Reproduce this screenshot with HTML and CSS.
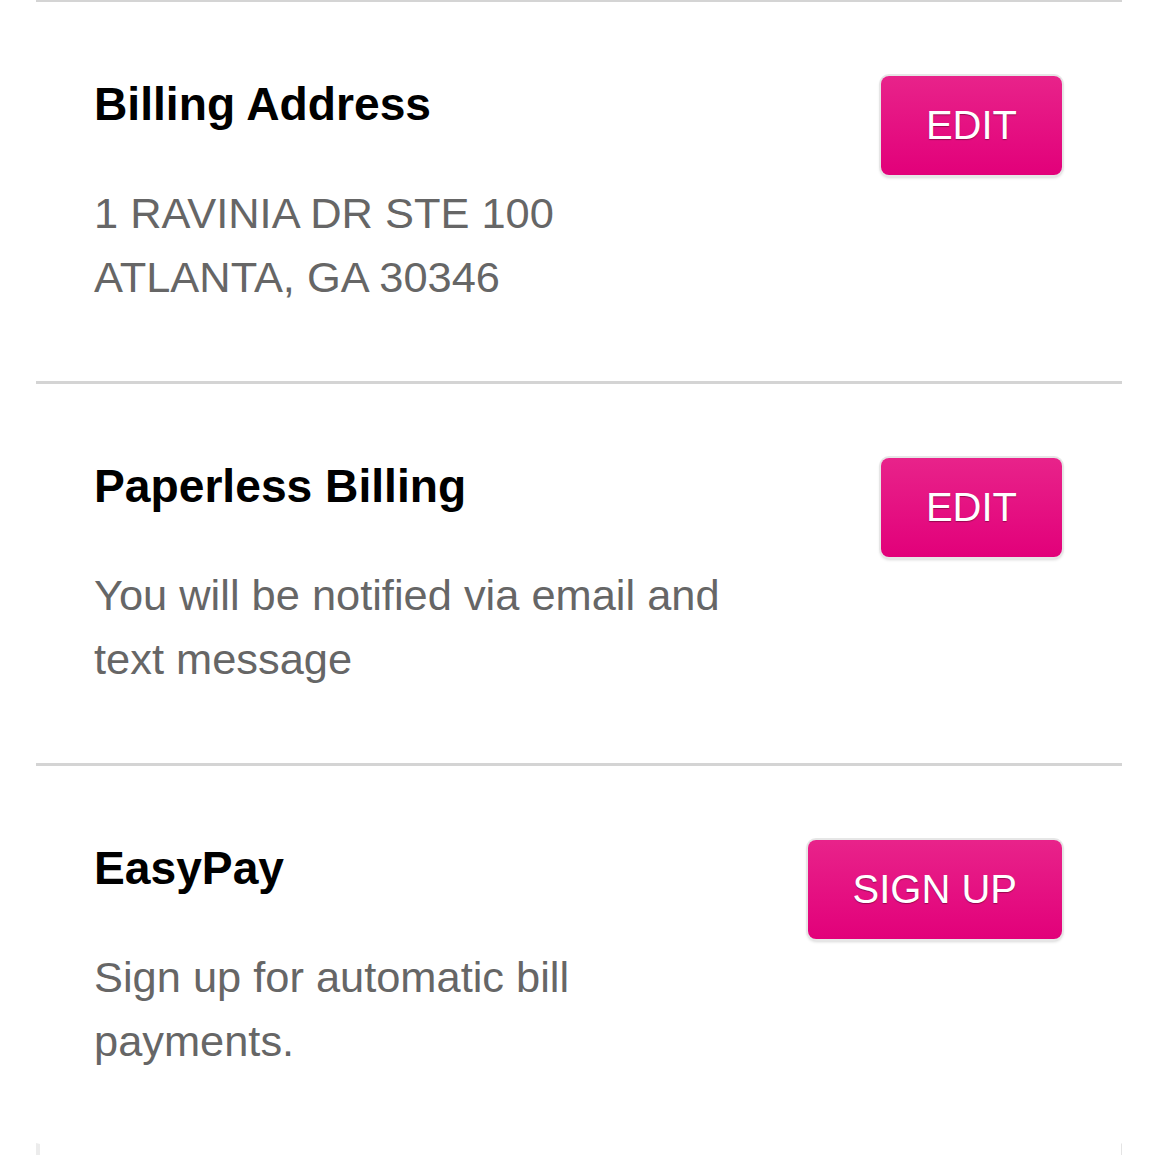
FILE: index.html
```html
<!DOCTYPE html>
<html lang="en">
<head>
<meta charset="utf-8">
<title>Billing settings</title>
<link rel="stylesheet" href="styles.css">
</head>
<body>
<div class="list">
  <section class="item">
    <div class="info">
      <h2 class="title">Billing Address</h2>
      <p class="desc">1 RAVINIA DR STE 100<br>ATLANTA, GA 30346</p>
    </div>
    <button class="btn">EDIT</button>
  </section>
  <section class="item">
    <div class="info">
      <h2 class="title">Paperless Billing</h2>
      <p class="desc">You will be notified via email and<br>text message</p>
    </div>
    <button class="btn">EDIT</button>
  </section>
  <section class="item">
    <div class="info">
      <h2 class="title">EasyPay</h2>
      <p class="desc">Sign up for automatic bill<br>payments.</p>
    </div>
    <button class="btn">SIGN UP</button>
  </section>
  <div class="next"></div>
</div>
</body>
</html>
```
FILE: styles.css
```css
html, body {
  margin: 0;
  padding: 0;
  background: #ffffff;
}
body {
  font-family: "Liberation Sans", Arial, sans-serif;
  overflow: hidden;
}
.list {
  margin: -1px 0 0 36px;
  width: 1086px;
}
.item {
  display: flex;
  justify-content: space-between;
  align-items: flex-start;
  border-top: 3px solid #d4d4d4;
  padding: 74px 60px 72px 58px;
}
.info {
  display: flex;
  flex-direction: column;
}
.title {
  margin: 2px 0 0 0;
  font-size: 46.2px;
  line-height: 53px;
  font-weight: bold;
  color: #000;
}
.desc {
  margin: 50px 0 0 0;
  font-size: 43.4px;
  line-height: 64px;
  color: #666;
}
.btn {
  margin-top: 0;
  height: 99px;
  padding: 0 45px;
  border: none;
  border-radius: 8px;
  background: linear-gradient(#e8238a, #e2007a);
  box-shadow: 0 0 0 2px #e6e6e6, 0 2px 3px 1px #d8d8d8;
  color: #fff;
  font-family: "Liberation Sans", Arial, sans-serif;
  font-size: 40px;
  text-shadow: 0 1px 1px rgba(90, 0, 40, 0.55);
  white-space: nowrap;
}
.next {
  height: 12px;
  border-left: 4px solid #ececec;
  border-right: 1px solid #e4e4e4;
  border-top: 1px solid transparent;
  box-sizing: border-box;
  margin-top: -2px;
}
```
